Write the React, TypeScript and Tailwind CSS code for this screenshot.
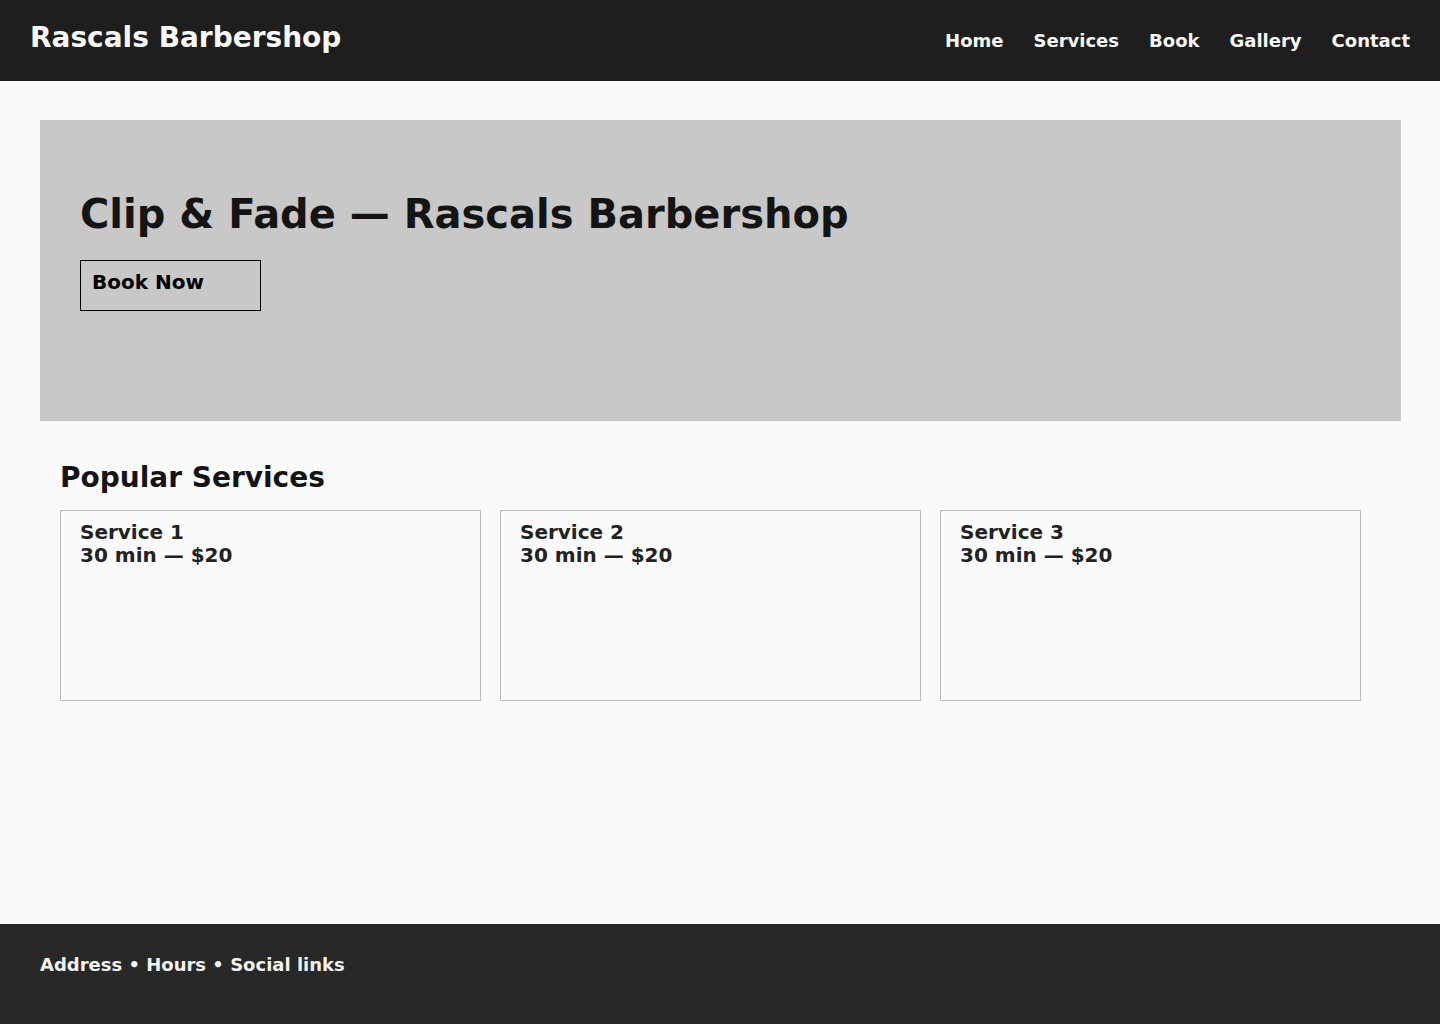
import React from "react";

export default function App() {
  const services = [1, 2, 3];
  return (
    <div
      className="min-h-[1024px] w-[1440px] flex flex-col bg-[#fafafa] leading-[normal] font-bold"
      style={{ fontFamily: '"DejaVu Sans", sans-serif' }}
    >
      <header className="h-[81px] bg-[#1e1e1e] px-[30px] flex justify-between items-start text-[#f7f7f7]">
        <div className="mt-[21px] text-[28px]">Rascals Barbershop</div>
        <nav className="mt-[30px] flex gap-[30px] text-[18px]">
          <span>Home</span>
          <span>Services</span>
          <span>Book</span>
          <span>Gallery</span>
          <span>Contact</span>
        </nav>
      </header>
      <main className="flex-1 pt-[39px] pl-[40px]">
        <section className="w-[1361px] h-[301px] bg-[#c8c8c8] pl-[40px] pt-[71px]">
          <h1 className="text-[40px] text-[#141414]">Clip &amp; Fade — Rascals Barbershop</h1>
          <div className="mt-[23px] w-[181px] h-[51px] border border-black pl-[11px] pt-[9px] text-[20px] text-black">
            Book Now
          </div>
        </section>
        <section className="pl-[20px] pt-[40px]">
          <h2 className="text-[28px] text-[#141414]">Popular Services</h2>
          <div className="mt-[16px] flex gap-[19px]">
            {services.map((n) => (
              <div
                key={n}
                className="w-[421px] h-[191px] border border-[#bdbdbd] pl-[19px] pt-[10px] text-[20px] leading-[23px] text-[#222]"
              >
                <div>Service {n}</div>
                <div>30 min — $20</div>
              </div>
            ))}
          </div>
        </section>
      </main>
      <footer className="h-[100px] bg-[#282828] px-[40px] pt-[30px] text-[18px] text-[#f2f2f2]">
        Address • Hours • Social links
      </footer>
    </div>
  );
}
